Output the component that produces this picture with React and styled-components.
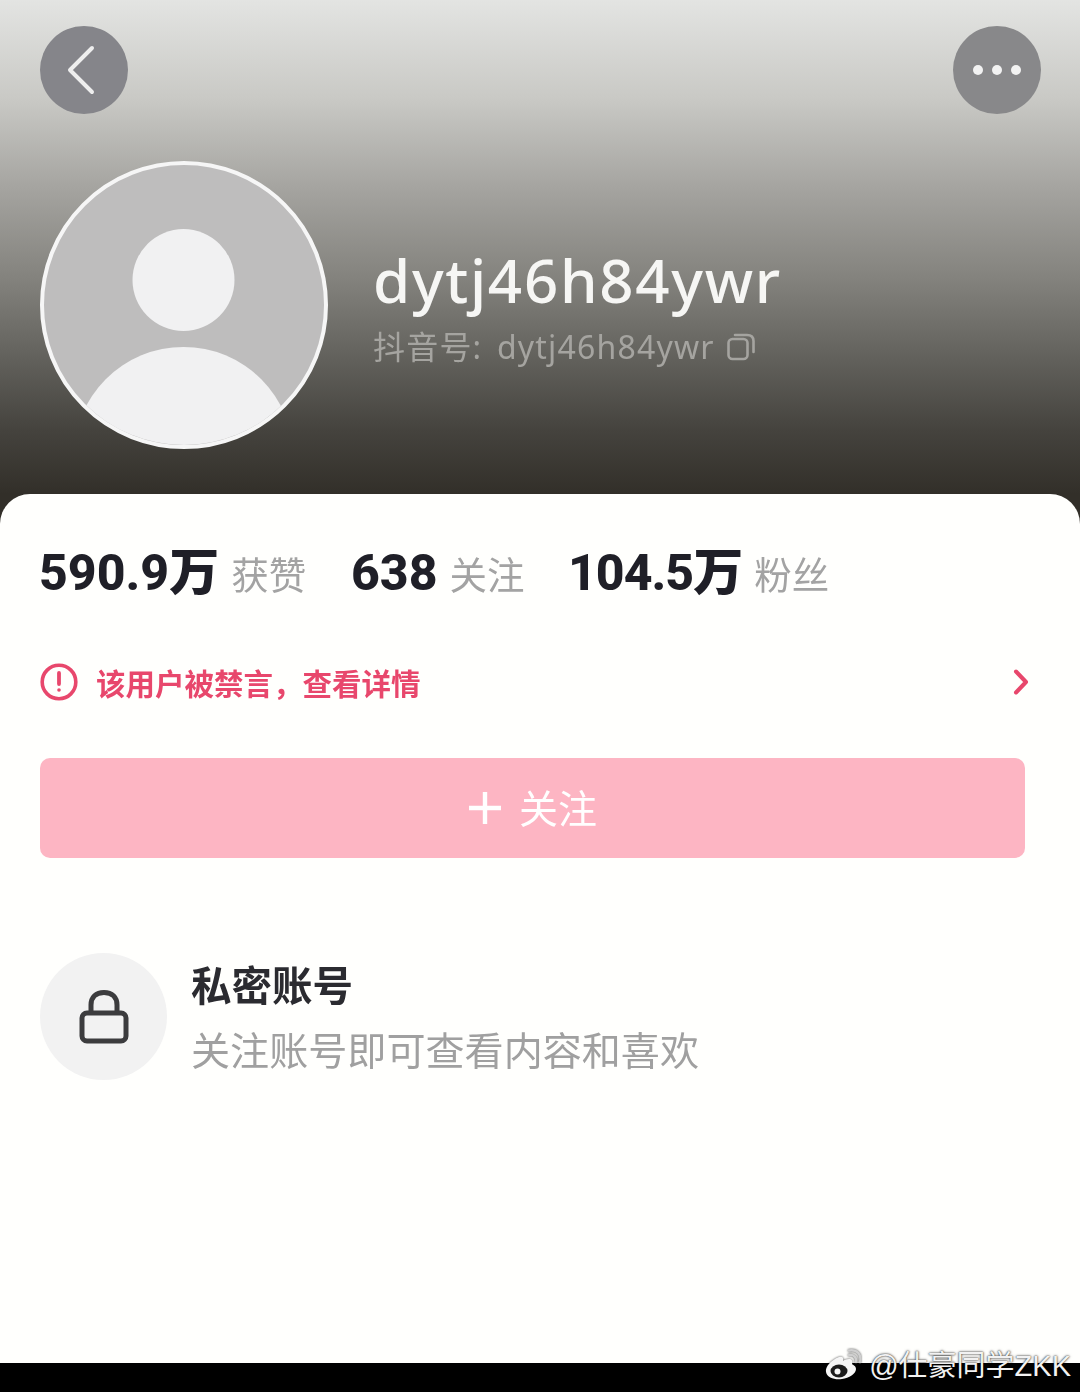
import styled, { createGlobalStyle } from "styled-components";

const GlobalStyle = createGlobalStyle`
  html, body {
    margin: 0;
    padding: 0;
    background: #000;
  }
  * {
    box-sizing: border-box;
  }
`;

const CJK = `"Noto Sans CJK SC", sans-serif`;
const LATIN = `"Noto Sans", "Noto Sans CJK SC", sans-serif`;
const NUM = `Roboto, "Noto Sans CJK SC", sans-serif`;

export default function App() {
  return (
    <Styled.Page>
      <GlobalStyle />
      <Styled.Soft>
        <Styled.Header>
          <Styled.TopBar>
            <Styled.RoundButton $tone="#85858a">
              <Styled.BackIcon width="32" height="50" viewBox="0 0 32 50" fill="none" stroke="#eeeeee" strokeWidth="4" strokeLinecap="round" strokeLinejoin="round">
                <path d="M26 3 L4 25 L26 47" />
              </Styled.BackIcon>
            </Styled.RoundButton>
            <Styled.RoundButton $tone="#88888a">
              <Styled.Dots>
                <Styled.Dot />
                <Styled.Dot />
                <Styled.Dot />
              </Styled.Dots>
            </Styled.RoundButton>
          </Styled.TopBar>

          <Styled.Profile>
            <Styled.Avatar>
              <svg width="280" height="280" viewBox="0 0 280 280">
                <circle cx="139.5" cy="115" r="51" fill="#f1f1f2" />
                <circle cx="139.5" cy="292" r="110" fill="#f1f1f2" />
              </svg>
            </Styled.Avatar>
            <Styled.Names>
              <Styled.Name>dytj46h84ywr</Styled.Name>
              <Styled.Handle>
                <span>抖音号: dytj46h84ywr</span>
                <svg width="28" height="28" viewBox="0 0 28 28" fill="none" stroke="#a5a4a0" strokeWidth="2.6">
                  <rect x="1.5" y="6" width="19" height="20" rx="4" />
                  <path d="M8 2 H20 Q26.5 2 26.5 8 V19" strokeLinecap="round" />
                </svg>
              </Styled.Handle>
            </Styled.Names>
          </Styled.Profile>
        </Styled.Header>

        <Styled.Sheet>
          <Styled.Stats>
            <Styled.Stat $width={312}>
              <Styled.StatValue>590.9万</Styled.StatValue>
              <Styled.StatLabel>获赞</Styled.StatLabel>
            </Styled.Stat>
            <Styled.Stat $width={217}>
              <Styled.StatValue>638</Styled.StatValue>
              <Styled.StatLabel>关注</Styled.StatLabel>
            </Styled.Stat>
            <Styled.Stat>
              <Styled.StatValue $tight>104.5万</Styled.StatValue>
              <Styled.StatLabel>粉丝</Styled.StatLabel>
            </Styled.Stat>
          </Styled.Stats>

          <Styled.Notice>
            <svg width="38" height="38" viewBox="0 0 38 38" fill="none" stroke="#e8476c">
              <circle cx="19" cy="19" r="16.8" strokeWidth="3.6" />
              <path d="M19 10 V21" strokeWidth="3.8" strokeLinecap="round" />
              <circle cx="19" cy="27" r="1.8" fill="#e8476c" stroke="none" />
            </svg>
            <Styled.NoticeText>该用户被禁言，查看详情</Styled.NoticeText>
            <svg width="16" height="26" viewBox="0 0 16 26" fill="none" stroke="#e8476c" strokeWidth="4" strokeLinecap="round" strokeLinejoin="round">
              <path d="M3 2.5 L13 13 L3 23.5" />
            </svg>
          </Styled.Notice>

          <Styled.FollowButton>
            <svg width="34" height="34" viewBox="0 0 34 34" stroke="#fff" strokeWidth="4.4">
              <path d="M17 1 V33 M1 17 H33" />
            </svg>
            <Styled.FollowLabel>关注</Styled.FollowLabel>
          </Styled.FollowButton>

          <Styled.Private>
            <Styled.LockCircle>
              <svg width="50" height="54" viewBox="0 0 50 54" fill="none" stroke="#3c3c3e" strokeWidth="5">
                <rect x="3" y="23" width="44" height="28" rx="5" />
                <path d="M12 23 V15 C12 7 17 2.5 25 2.5 C33 2.5 38 7 38 15 V23" />
              </svg>
            </Styled.LockCircle>
            <Styled.PrivateText>
              <Styled.PrivateTitle>私密账号</Styled.PrivateTitle>
              <Styled.PrivateHint>关注账号即可查看内容和喜欢</Styled.PrivateHint>
            </Styled.PrivateText>
          </Styled.Private>
        </Styled.Sheet>
      </Styled.Soft>

      <Styled.BottomBar />

      <Styled.Watermark>
        <Styled.WeiboLogo width="36" height="34" viewBox="0 0 36 34" fill="none">
          <path d="M14 8 C6 11 0 18 1 23 C2 29 10 31 17 30 C24 29 31 25 31 20 C31 17 28 16 27 15 C28 12 27 10 24 10 C21 10 19 11 18 12 C19 8 17 7 14 8 Z" fill="#f6f6f6" />
          <ellipse cx="14" cy="22" rx="8.5" ry="6.5" fill="#1c1c1c" />
          <circle cx="12.5" cy="22.5" r="3" fill="#f6f6f6" />
          <path d="M24 6 C29 5 32 9 31 13" stroke="#cfcfcf" strokeWidth="2.4" strokeLinecap="round" />
          <path d="M24 1.5 C32 0 37 6 35 13" stroke="#cfcfcf" strokeWidth="2.4" strokeLinecap="round" />
        </Styled.WeiboLogo>
        <Styled.WatermarkText>@仕豪同学ZKK</Styled.WatermarkText>
      </Styled.Watermark>
    </Styled.Page>
  );
}

const Styled = {
  Page: styled.div`
    position: relative;
    display: flex;
    flex-direction: column;
    width: 1080px;
    height: 1392px;
    overflow: hidden;
    background: #000;
  `,

  Soft: styled.div`
    display: flex;
    flex-direction: column;
    flex: 1;
    background: #322f29;
    filter: blur(0.7px);
  `,

  Header: styled.header`
    height: 494px;
    padding: 26px 39px 0 40px;
    background: linear-gradient(
      180deg,
      #e3e4e2 0%,
      #c9c9c5 20%,
      #a5a4a0 38%,
      #84837e 56%,
      #63625d 72%,
      #45433e 87%,
      #322f29 100%
    );
  `,

  TopBar: styled.div`
    display: flex;
    justify-content: space-between;
  `,

  RoundButton: styled.div`
    display: flex;
    align-items: center;
    justify-content: center;
    width: 88px;
    height: 88px;
    border-radius: 50%;
    background: ${(p) => p.$tone};
  `,

  BackIcon: styled.svg`
    margin-right: 5px;
  `,

  Dots: styled.div`
    display: flex;
    gap: 9px;
  `,

  Dot: styled.span`
    width: 10px;
    height: 10px;
    border-radius: 50%;
    background: #f2f2f2;
  `,

  Profile: styled.div`
    display: flex;
    align-items: center;
    gap: 45px;
    margin-top: 47px;
  `,

  Avatar: styled.div`
    width: 288px;
    height: 288px;
    border: 4px solid #f6f6f6;
    border-radius: 50%;
    overflow: hidden;
    background: #bebdbd;
    svg {
      display: block;
    }
  `,

  Names: styled.div`
    display: flex;
    flex-direction: column;
    gap: 11px;
    margin-top: 1px;
  `,

  Name: styled.div`
    font-family: ${LATIN};
    font-size: 60px;
    font-weight: 500;
    line-height: 72px;
    letter-spacing: 1.7px;
    color: #f6f6f4;
  `,

  Handle: styled.div`
    display: flex;
    align-items: center;
    gap: 12px;
    font-family: ${LATIN};
    font-size: 32px;
    line-height: 40px;
    letter-spacing: 1.2px;
    word-spacing: 5px;
    color: #a5a4a0;
  `,

  Sheet: styled.main`
    flex: 1;
    padding: 48px 51px 0 40px;
    border-radius: 30px 30px 0 0;
    background: #fffffd;
  `,

  Stats: styled.div`
    display: flex;
    align-items: center;
    height: 62px;
    margin-left: -1px;
  `,

  Stat: styled.div`
    display: flex;
    align-items: center;
    gap: 14px;
    ${(p) => p.$width && `width: ${p.$width}px;`}
  `,

  StatValue: styled.span`
    font-family: ${NUM};
    font-size: 50px;
    font-weight: 800;
    line-height: 62px;
    color: #1f1f27;
    ${(p) => p.$tight && `letter-spacing: -1px;`}
  `,

  StatLabel: styled.span`
    margin-left: -2px;
    font-family: ${CJK};
    font-size: 37.5px;
    line-height: 62px;
    color: #a3a3a3;
  `,

  Notice: styled.div`
    display: flex;
    align-items: center;
    gap: 18px;
    height: 40px;
    margin-top: 58px;
  `,

  NoticeText: styled.span`
    flex: 1;
    font-family: ${CJK};
    font-size: 29.5px;
    font-weight: 700;
    line-height: 40px;
    color: #e8476c;
  `,

  FollowButton: styled.div`
    display: flex;
    align-items: center;
    justify-content: center;
    gap: 17px;
    width: 985px;
    height: 100px;
    margin-top: 56px;
    border-radius: 10px;
    background: #fdb5c3;
    font-family: ${CJK};
    font-size: 39px;
    color: #fff;
  `,

  FollowLabel: styled.span`
    padding-bottom: 4px;
  `,

  Private: styled.div`
    display: flex;
    align-items: center;
    gap: 25px;
    margin-top: 95px;
  `,

  LockCircle: styled.div`
    display: flex;
    align-items: center;
    justify-content: center;
    width: 127px;
    height: 127px;
    border-radius: 50%;
    background: #f2f2f2;
  `,

  PrivateText: styled.div`
    display: flex;
    flex-direction: column;
    gap: 10px;
    margin-top: -2px;
    margin-left: -1px;
  `,

  PrivateTitle: styled.div`
    font-family: ${CJK};
    font-size: 40.5px;
    font-weight: 700;
    line-height: 54px;
    color: #2b2b30;
  `,

  PrivateHint: styled.div`
    font-family: ${CJK};
    font-size: 39.1px;
    line-height: 54px;
    color: #a0a0a0;
  `,

  BottomBar: styled.div`
    height: 29px;
    background: #000;
  `,

  Watermark: styled.div`
    position: absolute;
    right: 9px;
    bottom: 8px;
    display: flex;
    align-items: center;
    gap: 8px;
  `,

  WeiboLogo: styled.svg`
    filter: drop-shadow(0 0 1px rgba(0, 0, 0, 0.7));
  `,

  WatermarkText: styled.span`
    font-family: "Liberation Sans", "Noto Sans CJK SC", sans-serif;
    font-size: 29px;
    line-height: 36px;
    color: #f2f2f2;
    text-shadow: 0 0 1.5px rgba(0, 0, 0, 0.9), 0 0 3px rgba(0, 0, 0, 0.5);
  `,
};
